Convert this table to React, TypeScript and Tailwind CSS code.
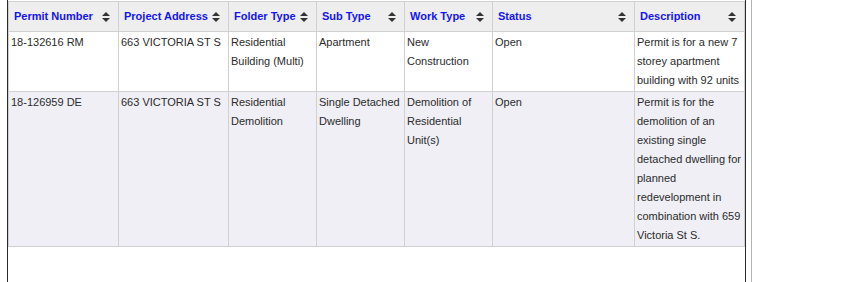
const columns = [
  { label: 'Permit Number', width: 110 },
  { label: 'Project Address', width: 110 },
  { label: 'Folder Type', width: 88 },
  { label: 'Sub Type', width: 88 },
  { label: 'Work Type', width: 88 },
  { label: 'Status', width: 142 },
  { label: 'Description', width: 110 },
]

const rows = [
  [
    '18-132616 RM',
    '663 VICTORIA ST S',
    'Residential Building (Multi)',
    'Apartment',
    'New Construction',
    'Open',
    'Permit is for a new 7 storey apartment building with 92 units',
  ],
  [
    '18-126959 DE',
    '663 VICTORIA ST S',
    'Residential Demolition',
    'Single Detached Dwelling',
    'Demolition of Residential Unit(s)',
    'Open',
    'Permit is for the demolition of an existing single detached dwelling for planned redevelopment in combination with 659 Victoria St S.',
  ],
]

function SortIcon() {
  return (
    <svg width="8" height="10" viewBox="0 0 8 10" className="shrink-0">
      <path d="M4 0 L8 4 L0 4 Z" fill="#333" />
      <path d="M0 6 L8 6 L4 10 Z" fill="#333" />
    </svg>
  )
}

export default function App() {
  return (
    <div className="h-[282px] w-[752px] border-r border-[#b4b4b4] bg-white pl-[7px] pr-[5px] font-['Liberation_Sans',Arial,sans-serif]">
      <div className="h-full border-x border-[#2a2a2a] pt-px">
        <table className="border-collapse text-[11px] leading-[19px] text-[#2b2b2b]">
          <tbody>
            <tr className="bg-[#eeeeee]">
              {columns.map((c) => (
                <th
                  key={c.label}
                  style={{ width: c.width, minWidth: c.width, maxWidth: c.width }}
                  className="box-border border border-[#d0d0d0] py-[5px] pl-[5px] pr-[8px] text-left font-bold"
                >
                  <div className="flex items-center justify-between">
                    <span className="text-[#1414f5]">{c.label}</span>
                    <SortIcon />
                  </div>
                </th>
              ))}
            </tr>
            {rows.map((r, i) => (
              <tr key={i} className={i % 2 ? 'bg-[#efeff5]' : 'bg-white'}>
                {r.map((cell, j) => (
                  <td key={j} className="border border-[#d0d0d0] px-[2px] py-px align-top">
                    {cell}
                  </td>
                ))}
              </tr>
            ))}
          </tbody>
        </table>
      </div>
    </div>
  )
}
